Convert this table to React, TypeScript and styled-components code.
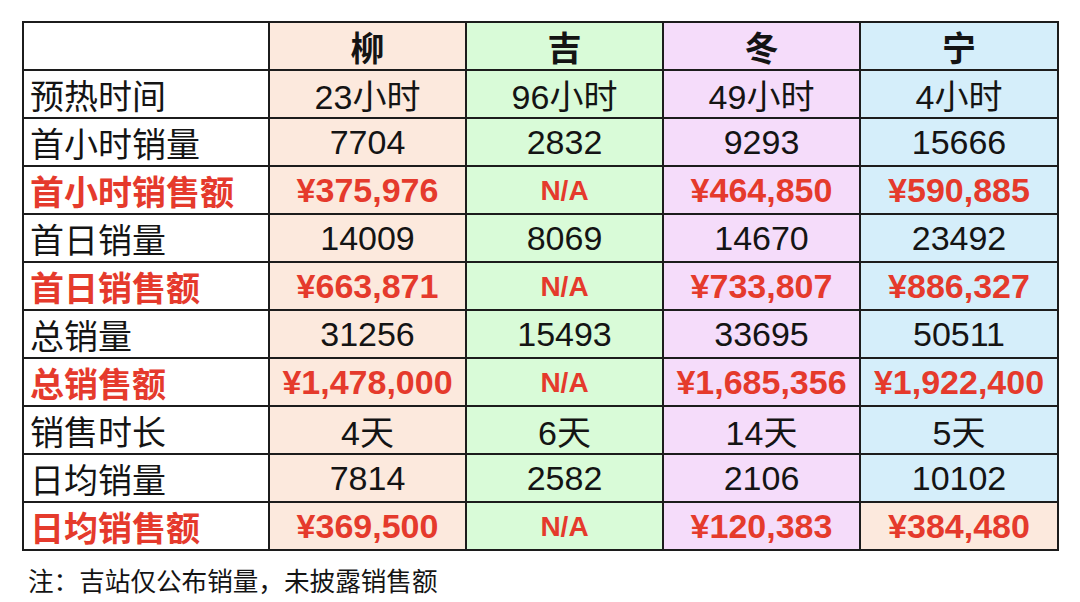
import React from 'react'
import styled, { createGlobalStyle } from 'styled-components'

const GlobalStyle = createGlobalStyle`
  html, body {
    margin: 0;
    padding: 0;
    background: #ffffff;
  }
  body {
    font-family: "Liberation Sans", "Noto Sans CJK SC", Arial, sans-serif;
    color: #111;
  }
`

const colors = {
  peach: '#fce9dd',
  green: '#d9fbd8',
  purple: '#f5dcfa',
  blue: '#d5eefa',
  white: '#ffffff',
}

const Page = styled.div`
  width: 1080px;
  height: 602px;
  padding: 21px 0 0 22px;
  box-sizing: border-box;
`

const Grid = styled.div`
  display: grid;
  grid-template-columns: 246px 197px 197px 197px 198px;
  grid-auto-rows: 48px;
  width: 1037px;
  border-top: 2px solid #1c1c1c;
  border-left: 2px solid #1c1c1c;
  box-sizing: border-box;
`

const Cell = styled.div<{ $bg: string; $red?: boolean; $head?: boolean; $label?: boolean }>`
  display: flex;
  align-items: center;
  justify-content: ${({ $label }) => ($label ? 'flex-start' : 'center')};
  padding-left: ${({ $label }) => ($label ? '6px' : '0')};
  background: ${({ $bg }) => $bg};
  border-right: 2px solid #1c1c1c;
  border-bottom: 2px solid #1c1c1c;
  box-sizing: border-box;
  font-size: 34px;
  font-weight: ${({ $red, $head }) => ($red || $head ? 700 : 400)};
  color: ${({ $red }) => ($red ? '#e53a2c' : '#141414')};
  white-space: nowrap;
  padding-top: 1px;
`

const NA = styled.span`
  font-size: 28px;
  font-weight: 700;
`

const Note = styled.div`
  margin-top: 10px;
  padding-left: 6px;
  font-size: 25.6px;
  color: #141414;
`

type Row = { label: string; values: string[]; red?: boolean; bgs?: string[] }

const colBg = [colors.peach, colors.green, colors.purple, colors.blue]

const rows: Row[] = [
  { label: '预热时间', values: ['23小时', '96小时', '49小时', '4小时'] },
  { label: '首小时销量', values: ['7704', '2832', '9293', '15666'] },
  { label: '首小时销售额', values: ['¥375,976', 'N/A', '¥464,850', '¥590,885'], red: true },
  { label: '首日销量', values: ['14009', '8069', '14670', '23492'] },
  { label: '首日销售额', values: ['¥663,871', 'N/A', '¥733,807', '¥886,327'], red: true },
  { label: '总销量', values: ['31256', '15493', '33695', '50511'] },
  { label: '总销售额', values: ['¥1,478,000', 'N/A', '¥1,685,356', '¥1,922,400'], red: true },
  { label: '销售时长', values: ['4天', '6天', '14天', '5天'] },
  { label: '日均销量', values: ['7814', '2582', '2106', '10102'] },
  {
    label: '日均销售额',
    values: ['¥369,500', 'N/A', '¥120,383', '¥384,480'],
    red: true,
    bgs: [colors.peach, colors.green, colors.purple, colors.peach],
  },
]

const heads = ['柳', '吉', '冬', '宁']

const App = () => {
  return (
    <Page>
      <GlobalStyle />
      <Grid>
        <Cell $bg={colors.white} />
        {heads.map((h, i) => (
          <Cell key={h} $bg={colBg[i]} $head>
            {h}
          </Cell>
        ))}
        {rows.map((row) => (
          <React.Fragment key={row.label}>
            <Cell $bg={colors.white} $label $red={row.red}>
              {row.label}
            </Cell>
            {row.values.map((v, i) => (
              <Cell key={i} $bg={(row.bgs || colBg)[i]} $red={row.red}>
                {v === 'N/A' ? <NA>{v}</NA> : v}
              </Cell>
            ))}
          </React.Fragment>
        ))}
      </Grid>
      <Note>注：吉站仅公布销量，未披露销售额</Note>
    </Page>
  )
}

export default App
